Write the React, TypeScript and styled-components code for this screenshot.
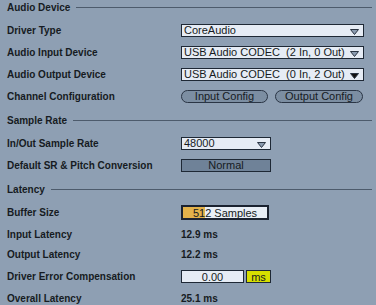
import React from 'react'
import styled, { createGlobalStyle } from 'styled-components'

const GlobalStyle = createGlobalStyle`
  html, body {
    margin: 0;
    padding: 0;
    background: #8e9fb3;
  }
`

const Page = styled.div`
  width: 376px;
  height: 305px;
  overflow: hidden;
  background: #8e9fb3;
  font-family: "Liberation Sans", Arial, sans-serif;
  color: #161b22;
  padding: 0 4px 0 7px;
  box-sizing: border-box;
`

const Section = styled.div<{ $gap?: number }>`
  display: flex;
  flex-direction: column;
  margin-top: ${({ $gap }) => $gap ?? 0}px;
`

const Header = styled.div`
  display: flex;
  align-items: center;
  gap: 6px;
  height: 14px;
  margin-bottom: 5px;
  font-size: 10px;
  font-weight: 700;
`

const HeaderLine = styled.div`
  flex: 1;
  height: 1px;
  background: #4d5b6c;
`

const Row = styled.div<{ $h?: number }>`
  display: flex;
  align-items: center;
  height: ${({ $h }) => $h ?? 22}px;
`

const Label = styled.div`
  width: 174px;
  flex: none;
  font-size: 10px;
  font-weight: 700;
`

const Value = styled.div`
  font-size: 10px;
  font-weight: 700;
`

const Controls = styled.div<{ $gap?: number }>`
  display: flex;
  align-items: center;
  gap: ${({ $gap }) => $gap ?? 7}px;
`

const Select = styled.div<{ $w: number }>`
  position: relative;
  width: ${({ $w }) => $w}px;
  height: 13px;
  box-sizing: border-box;
  border: 1px solid #1e2835;
  background: #e6ecf5;
  font-size: 11px;
  line-height: 11px;
  padding-left: 2px;
  display: flex;
  align-items: center;
  white-space: pre;
`

const Arrow = ({ dark }: { dark?: boolean }) => (
  <svg
    width="9"
    height="6"
    viewBox="0 0 9 6"
    style={{ position: 'absolute', right: 4, top: 4 }}
  >
    <path
      d="M0.5 0.5 H8.5 L4.5 5.5 Z"
      fill={dark ? '#111' : '#8a9bb0'}
      stroke="#2a3442"
      strokeWidth="1"
    />
  </svg>
)

const Pill = styled.div<{ $w: number }>`
  width: ${({ $w }) => $w}px;
  height: 13px;
  box-sizing: border-box;
  border: 1px solid #2a3545;
  border-radius: 7px;
  background: #7c8ea2;
  font-size: 11px;
  display: flex;
  align-items: center;
  justify-content: center;
`

const FlatButton = styled.div<{ $w: number }>`
  width: ${({ $w }) => $w}px;
  height: 13px;
  box-sizing: border-box;
  border: 1px solid #1e2835;
  background: #6f8298;
  font-size: 11px;
  display: flex;
  align-items: center;
  justify-content: center;
`

const BufferBox = styled.div`
  position: relative;
  width: 88px;
  height: 15px;
  box-sizing: border-box;
  border: 2px solid #1a2230;
  background: #e8eef6;
  font-size: 11px;
  display: flex;
  align-items: center;
  justify-content: center;
  overflow: hidden;
`

const BufferFill = styled.div`
  position: absolute;
  left: 0;
  top: 0;
  bottom: 0;
  background: #e3b24b;
`

const BufferText = styled.span`
  position: relative;
`

const NumberBox = styled.div`
  width: 63px;
  height: 13px;
  box-sizing: border-box;
  border: 1px solid #1e2835;
  background: #e6ecf5;
  font-size: 11px;
  display: flex;
  align-items: center;
  justify-content: center;
`

const UnitBox = styled.div`
  width: 25px;
  height: 13px;
  box-sizing: border-box;
  border: 1px solid #1e2835;
  background: #d6df00;
  font-size: 11px;
  display: flex;
  align-items: center;
  justify-content: center;
`

const App: React.FC = () => {
  const bufferFill = 22
  return (
    <Page>
      <GlobalStyle />
      <Section>
        <Header>
          Audio Device
          <HeaderLine />
        </Header>
        <Row>
          <Label>Driver Type</Label>
          <Select $w={183}>
            CoreAudio
            <Arrow />
          </Select>
        </Row>
        <Row>
          <Label>Audio Input Device</Label>
          <Select $w={183}>
            {'USB Audio CODEC  (2 In, 0 Out)'}
            <Arrow />
          </Select>
        </Row>
        <Row>
          <Label>Audio Output Device</Label>
          <Select $w={183}>
            {'USB Audio CODEC  (0 In, 2 Out)'}
            <Arrow dark />
          </Select>
        </Row>
        <Row>
          <Label>Channel Configuration</Label>
          <Controls>
            <Pill $w={87}>Input Config</Pill>
            <Pill $w={88}>Output Config</Pill>
          </Controls>
        </Row>
      </Section>

      <Section $gap={6}>
        <Header>
          Sample Rate
          <HeaderLine />
        </Header>
        <Row>
          <Label>In/Out Sample Rate</Label>
          <Select $w={90}>
            48000
            <Arrow />
          </Select>
        </Row>
        <Row>
          <Label>Default SR &amp; Pitch Conversion</Label>
          <FlatButton $w={90}>Normal</FlatButton>
        </Row>
      </Section>

      <Section $gap={6}>
        <Header>
          Latency
          <HeaderLine />
        </Header>
        <Row $h={23}>
          <Label>Buffer Size</Label>
          <BufferBox>
            <BufferFill style={{ width: bufferFill }} />
            <BufferText>512 Samples</BufferText>
          </BufferBox>
        </Row>
        <Row $h={20}>
          <Label>Input Latency</Label>
          <Value>12.9 ms</Value>
        </Row>
        <Row $h={21}>
          <Label>Output Latency</Label>
          <Value>12.2 ms</Value>
        </Row>
        <Row $h={23}>
          <Label>Driver Error Compensation</Label>
          <Controls $gap={2}>
            <NumberBox>0.00</NumberBox>
            <UnitBox>ms</UnitBox>
          </Controls>
        </Row>
        <Row $h={21}>
          <Label>Overall Latency</Label>
          <Value>25.1 ms</Value>
        </Row>
      </Section>
    </Page>
  )
}

export default App
